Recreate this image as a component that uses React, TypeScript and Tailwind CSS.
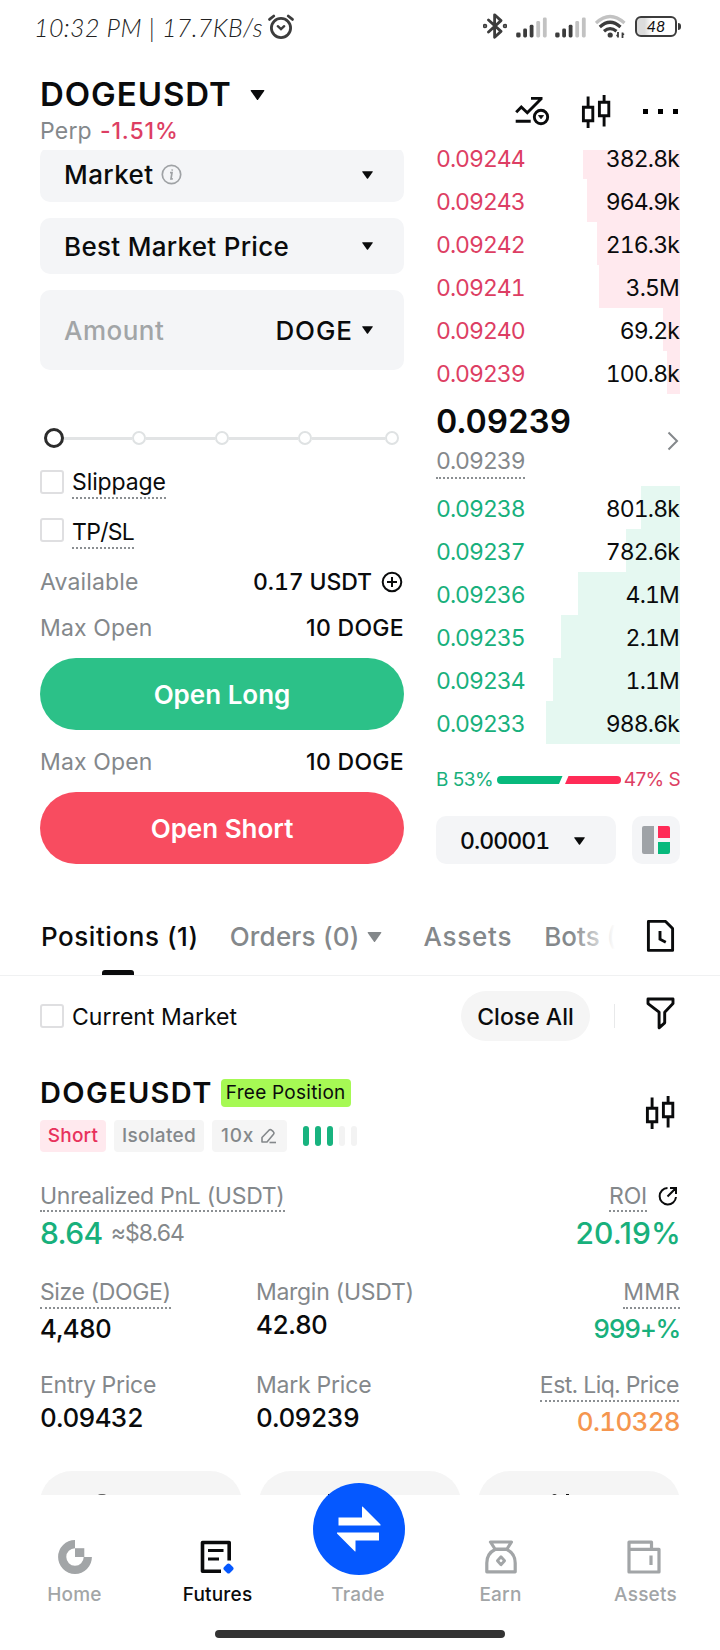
import { ReactNode } from "react";

type Level = { price: string; qty: string; bar: string };

const asks: Level[] = [
  { price: "0.09244", qty: "382.8k", bar: "w-[97px]" },
  { price: "0.09243", qty: "964.9k", bar: "w-[93px]" },
  { price: "0.09242", qty: "216.3k", bar: "w-[83px]" },
  { price: "0.09241", qty: "3.5M", bar: "w-[81px]" },
  { price: "0.09240", qty: "69.2k", bar: "w-[17px]" },
  { price: "0.09239", qty: "100.8k", bar: "w-[13px]" },
];

const bids: Level[] = [
  { price: "0.09238", qty: "801.8k", bar: "w-[39px]" },
  { price: "0.09237", qty: "782.6k", bar: "w-[54px]" },
  { price: "0.09236", qty: "4.1M", bar: "w-[102px]" },
  { price: "0.09235", qty: "2.1M", bar: "w-[119px]" },
  { price: "0.09234", qty: "1.1M", bar: "w-[127px]" },
  { price: "0.09233", qty: "988.6k", bar: "w-[134px]" },
];

const Caret = ({ className = "w-[11px] h-[8px]" }: { className?: string }) => (
  <svg viewBox="0 0 10 7" className={className} fill="currentColor">
    <path d="M0.6 0h8.8q.7 0 .3.7L5.5 6.6q-.5.7-1 0L.3.7Q-.1 0 .6 0z" />
  </svg>
);

const Candles = () => (
  <svg width="32" height="34" viewBox="0 0 32 34" fill="none" stroke="#0a0b0c" strokeWidth="2.9">
    <path d="M3.4 13.2h9.4v13.6H3.4zM8.1 2.4v10.8M8.1 26.8V34M19.4 8.2h9.4v13.6h-9.4zM24.1 1v7.2M24.1 21.8v10.6" />
  </svg>
);

const Signal = () => (
  <svg width="32" height="21" viewBox="0 0 32 21">
    <rect x="0.2" y="15.5" width="4.4" height="5" rx="1.4" fill="#3c3c3c" />
    <rect x="7.2" y="11.5" width="3.8" height="9" rx="1.4" fill="#3c3c3c" />
    <rect x="13.7" y="7.8" width="3.8" height="12.7" rx="1.4" fill="#3c3c3c" />
    <rect x="20.3" y="4" width="3.8" height="16.5" rx="1.4" fill="#c2c2c2" />
    <rect x="26.9" y="0.5" width="3.8" height="20" rx="1.4" fill="#c2c2c2" />
  </svg>
);

const Checkbox = () => (
  <span className="block w-6 h-6 shrink-0 rounded-[3px] border-2 border-[#dfdfe1]" />
);

const StatusBar = () => (
  <div className="h-14 flex items-center justify-between pl-[34px] pr-[39px] shrink-0">
    <div className="flex items-center pb-[3px]">
      <span className="font-['Lato'] italic font-light text-[25px] tracking-[0.4px] text-[#222] pt-[2px] w-[233px] whitespace-nowrap">
        10:32 PM | 17.7KB/s
      </span>
      <svg width="28" height="26" viewBox="0 0 28 26" fill="none" stroke="#3c3c3c" strokeWidth="2.8" strokeLinecap="round">
        <circle cx="14" cy="14" r="9.6" />
        <path d="M2.5 5.4 6.8 2M25.5 5.4 21.2 2" />
        <path d="m10.8 12.2 3.2 3 3.2-3" strokeWidth="2.4" />
      </svg>
    </div>
    <div className="flex items-center pb-[4px]">
      <svg width="24" height="26" viewBox="0 0 24 26" fill="none" stroke="#3c3c3c" strokeWidth="2.8" strokeLinejoin="round" strokeLinecap="round">
        <path d="M5.5 7 18 18.4l-6.4 5.8V1.8L18 7.6 5.5 19" />
        <circle cx="2" cy="13" r="0.9" />
        <circle cx="22" cy="13" r="0.9" />
      </svg>
      <div className="ml-[9px] mt-[2px]"><Signal /></div>
      <div className="ml-[7px] mt-[2px]"><Signal /></div>
      <svg className="ml-[8px]" width="31" height="25" viewBox="0 0 31 25" fill="none" strokeWidth="3.2">
        <path d="M1 9Q15 -4 29.5 9" stroke="#c2c2c2" />
        <path d="M4.8 13Q15 3.5 25.5 13" stroke="#3c3c3c" />
        <path d="M9 17.2Q15 12 21.5 17.2" stroke="#3c3c3c" />
        <circle cx="15.2" cy="21" r="2.6" fill="#3c3c3c" />
        <path d="M23 18v5.5M27.5 24v-5.5" stroke="#3c3c3c" strokeWidth="1.8" />
        <path d="M21.3 21.5h1.7M27.5 20.3h1.7" stroke="#3c3c3c" strokeWidth="1.5" />
      </svg>
      <div className="ml-[9px] w-[42px] h-[21px] rounded-[6px] border-2 border-[#3c3c3c] flex items-center justify-center bg-gradient-to-r from-[#dcdcdc] from-20% to-white to-40%">
        <span className="font-['Lato'] italic text-[16px] leading-none text-[#111]">48</span>
      </div>
      <span className="w-[3px] h-[7px] ml-px bg-[#3c3c3c] rounded-r-sm" />
    </div>
  </div>
);

const Header = () => (
  <header className="h-[94px] shrink-0 pl-10 pr-[42px] flex justify-between">
    <div className="pt-[20px]">
      <div className="flex items-center h-[38px]">
        <h1 className="text-[33px] font-semibold tracking-[0.95px]">DOGEUSDT</h1>
        <Caret className="ml-[18px] w-[15px] h-[10px]" />
      </div>
      <div className="flex items-center h-[34px] text-[23px]">
        <span className="text-[#84888b] tracking-[0.2px]">Perp</span>
        <span className="ml-[8px] font-medium tracking-[0.9px] text-[#dd3e63]">-1.51%</span>
      </div>
    </div>
    <div className="flex items-center pt-[16px]">
      <svg width="36" height="32" viewBox="0 0 36 32" fill="none" stroke="#0a0b0c" strokeWidth="2.9">
        <path d="M2.2 17.3 7.3 12l6 5.8L27.2 3.7M17 3.4h11.5M1.7 26.3h15" />
        <circle cx="27" cy="22" r="6.7" />
        <path d="M24.5 20.5h5L27 23.8z" fill="#0a0b0c" strokeWidth="0.8" />
      </svg>
      <div className="ml-[30px]"><Candles /></div>
      <div className="ml-[31px] flex gap-[10px]">
        <i className="block w-[5px] h-[5px] bg-black" />
        <i className="block w-[5px] h-[5px] bg-black" />
        <i className="block w-[5px] h-[5px] bg-black" />
      </div>
    </div>
  </header>
);

const OrderForm = () => (
  <section className="w-[364px] flex flex-col">
    <div className="h-[52px] overflow-hidden flex flex-col justify-end">
      <div className="h-[55px] shrink-0 rounded-[10px] bg-[#f4f5f7] flex items-center pl-6 pr-[31px] text-[26px] font-medium">
        <span className="tracking-[0.4px]">Market</span>
        <svg className="ml-[8px]" width="21" height="21" viewBox="0 0 21 21" fill="none" stroke="#9fa2a5" strokeWidth="1.7">
          <circle cx="10.5" cy="10.5" r="9.2" />
          <path d="M9 8.7h2L10 14.8h1.8M11.3 5.4l-.2 1.2" />
        </svg>
        <Caret className="ml-auto w-[11px] h-[8px]" />
      </div>
    </div>
    <div className="mt-4 h-14 rounded-[10px] bg-[#f4f5f7] flex items-center pl-6 pr-[31px] text-[26px] font-medium">
      <span className="tracking-[0.3px]">Best Market Price</span>
      <Caret className="ml-auto w-[11px] h-[8px]" />
    </div>
    <div className="mt-4 h-20 rounded-[10px] bg-[#f4f5f7] flex items-center pl-6 pr-[31px] text-[26px] font-medium">
      <span className="tracking-[0.5px] text-[#a2a5a7]">Amount</span>
      <span className="ml-auto mr-[9px] tracking-[0.95px]">DOGE</span>
      <Caret />
    </div>

    {/* size slider */}
    <div className="mt-[58px] h-5 flex items-center pl-1 pr-[5px]">
      <i className="block w-5 h-5 rounded-full border-[3px] border-[#2c2c2c]" />
      <i className="block w-[68px] h-[3px] bg-[#e2e4e5]" />
      <i className="block w-[14px] h-[14px] rounded-full border-2 border-[#dfe2e3]" />
      <i className="block w-[69px] h-[3px] bg-[#e2e4e5]" />
      <i className="block w-[14px] h-[14px] rounded-full border-2 border-[#dfe2e3]" />
      <i className="block w-[69px] h-[3px] bg-[#e2e4e5]" />
      <i className="block w-[14px] h-[14px] rounded-full border-2 border-[#dfe2e3]" />
      <i className="block flex-1 h-[3px] bg-[#e2e4e5]" />
      <i className="block w-[14px] h-[14px] rounded-full border-2 border-[#dfe2e3]" />
    </div>

    <div className="mt-[18px] h-[34px] flex items-start text-[23px]">
      <div className="pt-[4px]"><Checkbox /></div>
      <span className="ml-2 pt-[2px] leading-[29px] tracking-[-0.1px] border-b-2 border-dotted border-[#8b8f92]">Slippage</span>
    </div>
    <div className="mt-[16px] h-[34px] flex items-start text-[23px]">
      <div className="pt-[2px]"><Checkbox /></div>
      <span className="ml-2 pt-[2px] leading-[29px] tracking-[-0.7px] border-b-2 border-dotted border-[#8b8f92]">TP/SL</span>
    </div>

    <div className="mt-[16px] h-[32px] flex items-center text-[23px]">
      <span className="text-[#84888b] tracking-[0.15px]">Available</span>
      <span className="ml-auto font-medium tracking-[-0.1px] tabular-nums">0.17 USDT</span>
      <svg className="ml-[9px] mr-[1px]" width="22" height="22" viewBox="0 0 22 22" fill="none" stroke="#0a0b0c" strokeWidth="2">
        <circle cx="11" cy="11" r="9.3" />
        <path d="M11 6v10M6 11h10" />
      </svg>
    </div>
    <div className="mt-[14px] h-[32px] flex items-center justify-between text-[23px]">
      <span className="text-[#84888b] tracking-[0.15px]">Max Open</span>
      <span className="font-medium tracking-[0.3px]">10 DOGE</span>
    </div>
    <button className="mt-[14px] h-[72px] rounded-full bg-[#2cc188] text-white text-[26px] font-semibold">Open Long</button>
    <div className="mt-[16px] h-[32px] flex items-center justify-between text-[23px]">
      <span className="text-[#84888b] tracking-[0.15px]">Max Open</span>
      <span className="font-medium tracking-[0.3px]">10 DOGE</span>
    </div>
    <button className="mt-[14px] h-[72px] rounded-full bg-[#f84c60] text-white text-[26px] font-semibold">Open Short</button>
  </section>
);

const Row = ({ level, side }: { level: Level; side: "ask" | "bid" }) => (
  <div className="relative h-[43px] shrink-0 flex items-center justify-between pt-[3px] pr-px text-[23px] tabular-nums">
    <div className={`absolute right-0 inset-y-0 ${level.bar} ${side === "ask" ? "bg-[#ffe9ee]" : "bg-[#e5f8f1]"}`} />
    <span className={`relative tracking-[-1px] ${side === "ask" ? "text-[#dd3e63]" : "text-[#18b07c]"}`}>{level.price}</span>
    <span className="relative tracking-[-0.85px]">{level.qty}</span>
  </div>
);

const OrderBook = () => (
  <section className="w-[244px] flex flex-col">
    <div className="h-[244px] overflow-hidden flex flex-col justify-end">
      {asks.map((l) => <Row key={l.price} level={l} side="ask" />)}
    </div>
    <div className="h-[92px] flex items-center justify-between">
      <div className="flex flex-col items-start">
        <span className="text-[33px] leading-[40px] font-semibold tracking-[-0.3px] tabular-nums">0.09239</span>
        <span className="text-[23px] leading-[31px] pt-[2px] mt-[3px] tracking-[-1px] tabular-nums text-[#84888b] border-b-2 border-dotted border-[#8b8f92]">0.09239</span>
      </div>
      <svg className="mr-px mt-[2px]" width="12" height="20" viewBox="0 0 12 20" fill="none" stroke="#84888b" strokeWidth="2">
        <path d="m1.5 1.5 8.5 8.5-8.5 8.5" />
      </svg>
    </div>
    {bids.map((l) => <Row key={l.price} level={l} side="bid" />)}

    <div className="mt-[24px] h-[24px] flex items-center justify-between text-[19px]">
      <span className="tracking-[-0.5px] text-[#18b07c]">B 53%</span>
      <svg width="124" height="8" viewBox="0 0 124 8">
        <path d="M4 0h61.5l-3.5 8H4a4 4 0 0 1 0-8z" fill="#07b97c" />
        <path d="M71.5 0H120a4 4 0 0 1 0 8H68z" fill="#ff2b57" />
      </svg>
      <span className="tracking-[-0.6px] text-[#dd3e63]">47% S</span>
    </div>
    <div className="mt-[24px] flex justify-between">
      <div className="w-[180px] h-12 rounded-[10px] bg-[#f4f5f7] flex items-center pl-6 pr-[31px] pt-[2px] text-[23px] font-medium">
        <span className="tabular-nums tracking-[-0.9px]">0.00001</span>
        <Caret className="ml-auto w-[11px] h-[8px]" />
      </div>
      <div className="w-12 h-12 rounded-[10px] bg-[#f4f5f7] flex items-center justify-center gap-1">
        <i className="block w-3 h-7 rounded-l-[2px] bg-[#9fa3a7]" />
        <div className="flex flex-col gap-1">
          <i className="block w-3 h-3 rounded-tr-[2px] bg-[#ff2b57]" />
          <i className="block w-3 h-3 rounded-br-[2px] bg-[#07b97c]" />
        </div>
      </div>
    </div>
  </section>
);

const Tabs = () => (
  <nav className="mt-[34px] h-[78px] shrink-0 pl-[41px] pr-[45px] flex border-b border-[#f0f1f2] text-[26px] font-medium">
    <div className="relative w-[574px] h-[77px] flex overflow-hidden whitespace-nowrap text-[#84888b]">
      <div className="w-[158px] flex flex-col items-center text-[#0a0b0c]">
        <span className="leading-[78px] h-[72px] tracking-[0.55px]">Positions (1)</span>
        <i className="block w-8 h-[5px] mr-[3px] rounded-t-[3px] bg-[#0a0b0c]" />
      </div>
      <div className="ml-[31px] flex items-center h-[77px]">
        <span className="tracking-[0.2px]">Orders (0)</span>
        <Caret className="ml-[7px] w-[15px] h-[10px]" />
      </div>
      <span className="ml-[42px] leading-[78px] tracking-[0.75px]">Assets</span>
      <span className="ml-[32px] leading-[78px]">Bots (0)</span>
      <div className="absolute right-0 inset-y-0 w-[44px] bg-gradient-to-r from-white/0 to-white" />
    </div>
    <svg className="ml-auto mt-[21px]" width="29" height="34" viewBox="0 0 29 34" fill="none" stroke="#0a0b0c" strokeWidth="2.9">
      <path d="M2.4 2.4h17.2l7 7.2v21.8H2.4z" strokeLinejoin="round" />
      <path d="M14 12v8.2l5.8 3" />
    </svg>
  </nav>
);

const Label = ({ children, dotted, className = "tracking-[-0.3px]" }: { children: ReactNode; dotted?: boolean; className?: string }) => (
  <span className={`text-[23px] leading-[30px] font-normal text-[#84888b] ${dotted ? "border-b-2 border-dotted border-[#8b8f92]" : ""} ${className}`}>
    {children}
  </span>
);

const Position = () => (
  <section className="px-10 flex flex-col">
    <div className="mt-[15px] h-[50px] flex items-center">
      <Checkbox />
      <span className="ml-2 pt-[2px] text-[23px] tracking-[0.05px]">Current Market</span>
      <button className="ml-auto w-[129px] h-[50px] pt-[2px] rounded-full bg-[#f5f5f5] text-[23px] font-medium">Close All</button>
      <i className="block ml-[24px] w-px h-6 bg-[#e8e9ea]" />
      <svg className="ml-[31px] mr-[5px] mb-[5px]" width="29" height="33" viewBox="0 0 29 33" fill="none" stroke="#0a0b0c" strokeWidth="2.9" strokeLinejoin="round">
        <path d="M2 2h25v4.6l-8.3 8.6v10.6l-5.6 5V15.2L2 6.6z" />
      </svg>
    </div>

    <div className="mt-[34px] flex items-center justify-between">
      <div>
        <div className="h-[36px] flex items-center">
          <h2 className="text-[29px] font-semibold tracking-[1.35px]">DOGEUSDT</h2>
          <span className="ml-[8px] w-[130px] h-7 rounded-[4px] bg-[#a6f954] text-[19px] leading-7 text-center tracking-[0.25px]">Free Position</span>
        </div>
        <div className="mt-[9px] h-8 flex items-center text-[19px] leading-8 text-[#84888b]">
          <span className="w-[66px] text-center rounded-[4px] bg-[#ffe9ee] text-[#e8315c] font-medium tracking-[0.2px]">Short</span>
          <span className="ml-2 w-[90px] text-center rounded-[4px] bg-[#f5f5f5] font-medium tracking-[0.3px]">Isolated</span>
          <span className="ml-2 w-[75px] flex items-center pl-[9px] rounded-[4px] bg-[#f5f5f5] font-medium tracking-[0.8px]">
            10x
            <svg className="ml-[6px]" width="17" height="17" viewBox="0 0 17 17" fill="none" stroke="#84888b" strokeWidth="1.6">
              <path d="M2 9.5 9 2.2q1.3-1.2 2.6 0l1.7 1.5q1.2 1.2.2 2.6L7 14H2z" strokeLinejoin="round" />
              <path d="M9.5 14.5H16" />
            </svg>
          </span>
          <div className="ml-4 flex gap-[6px]">
            <i className="block w-[6px] h-5 rounded-full bg-[#18b37f]" />
            <i className="block w-[6px] h-5 rounded-full bg-[#18b37f]" />
            <i className="block w-[6px] h-5 rounded-full bg-[#18b37f]" />
            <i className="block w-[6px] h-5 rounded-full bg-[#f3f3f3]" />
            <i className="block w-[6px] h-5 rounded-full bg-[#f3f3f3]" />
          </div>
        </div>
      </div>
      <div className="mr-1 mb-[3px]"><Candles /></div>
    </div>

    <div className="mt-[29px] flex justify-between text-[23px] text-[#84888b]">
      <div>
        <div className="h-[31px] flex items-start"><Label dotted className="-mb-1 tracking-[-0.27px]"><span className="block h-[29px]">Unrealized PnL (USDT)</span></Label></div>
        <div className="h-[42px] flex items-center">
          <span className="text-[30px] font-medium text-[#18b07c] tracking-[-0.6px]">8.64</span>
          <span className="ml-[8px] tracking-[-0.95px]">≈$8.64</span>
        </div>
      </div>
      <div className="flex flex-col items-end">
        <div className="h-[31px] flex items-start">
          <Label dotted className="tracking-[-0.2px]"><span className="block h-[29px]">ROI</span></Label>
          <svg className="ml-[11px] mt-[5px] mr-[2px]" width="20" height="20" viewBox="0 0 20 20" fill="none" stroke="#0a0b0c" strokeWidth="2">
            <path d="M9.5 2A8.2 8.2 0 1 0 18 11M9.5 10.5 17.5 2.5M12 2h6v6" />
          </svg>
        </div>
        <span className="text-[30px] leading-[42px] -mr-px font-medium text-[#18b07c] tracking-[0.15px]">20.19%</span>
      </div>
    </div>

    <div className="mt-[23px] grid grid-cols-[216px_1fr_auto] text-[26px] font-medium tabular-nums">
      <div className="h-[93px] flex flex-col items-start">
        <Label dotted className="tracking-[-0.4px]">Size (DOGE)</Label>
        <span className="leading-[40px] tracking-[-0.6px]">4,480</span>
      </div>
      <div className="h-[93px] flex flex-col items-start">
        <Label>Margin (USDT)</Label>
        <span className="leading-[36px] tracking-[-0.6px]">42.80</span>
      </div>
      <div className="h-[93px] flex flex-col items-end">
        <Label dotted className="tracking-[0.1px]">MMR</Label>
        <span className="leading-[40px] tracking-[-1.3px] text-[#18b07c]">999+%</span>
      </div>
      <div className="h-[93px] flex flex-col items-start">
        <Label className="tracking-[-0.25px]">Entry Price</Label>
        <span className="leading-[36px] tracking-[-0.7px]">0.09432</span>
      </div>
      <div className="h-[93px] flex flex-col items-start">
        <Label className="tracking-[-0.2px]">Mark Price</Label>
        <span className="leading-[36px] tracking-[-0.7px]">0.09239</span>
      </div>
      <div className="h-[93px] flex flex-col items-end">
        <Label dotted className="mr-px tracking-[-0.5px]">Est. Liq. Price</Label>
        <span className="leading-[40px] tracking-[-0.7px] text-[#f5964f]">0.10328</span>
      </div>
    </div>

    {/* action buttons, scrolled under the bottom nav */}
    <div className="mt-[8px] h-[24px] overflow-hidden flex justify-between">
      <div className="w-[202px] h-[64px] rounded-[32px] bg-[#f5f5f5] pt-[23px] pl-[57px]"><i className="block w-[10px] h-1 rounded-t-full bg-[#666]" /></div>
      <div className="w-[202px] h-[64px] rounded-[32px] bg-[#f5f5f5] pt-[23px] pl-[69px]"><i className="block w-[3px] h-1 bg-[#111]" /></div>
      <div className="w-[202px] h-[64px] rounded-[32px] bg-[#f5f5f5] pt-[23px] pl-[74px] flex gap-[9px]">
        <i className="block w-[5px] h-1 rounded-t-full bg-[#333]" />
        <i className="block w-[3px] h-1 bg-[#111]" />
      </div>
    </div>
  </section>
);

const NavItem = ({ label, active, children }: { label: string; active?: boolean; children?: ReactNode }) => (
  <div className={`flex flex-col items-center justify-end ${active ? "text-[#0a0b0c]" : "text-[#a2a5a7]"}`}>
    {children}
    <span className="mt-[6px] text-[19px] leading-[30px] font-medium tracking-[0.2px]">{label}</span>
  </div>
);

const BottomNav = () => (
  <footer className="h-[155px] shrink-0 flex flex-col items-center bg-white">
    <div className="h-[115px] w-full pl-[3px] grid grid-rows-[115px] grid-cols-[143px_143px_138px_147px_143px]">
      <NavItem label="Home">
        <svg width="34" height="34" viewBox="0 0 34 34" fill="none">
          <path d="M17 4.2A12.8 12.8 0 1 0 29.8 17" stroke="#a2a5a7" strokeWidth="8.2" />
          <path d="M17 8.2h9.3V17H17z" fill="#a2a5a7" />
        </svg>
      </NavItem>
      <NavItem label="Futures" active>
        <svg className="mr-[2px]" width="34" height="34" viewBox="0 0 34 34" fill="none" stroke="#0a0b0c" strokeWidth="3.6">
          <path d="M29.2 20.5V2.5H2.500v28.7h18.5" strokeLinejoin="round" />
          <path d="M8 10.5h15.5M8 19h11" strokeWidth="3.2" />
          <path d="m28.5 25.5 3 3-3 3-3-3z" fill="#0558ff" stroke="#0558ff" strokeWidth="4" strokeLinejoin="round" />
        </svg>
      </NavItem>
      <NavItem label="Trade">
        <div className="w-[92px] h-[92px] ml-[2px] shrink-0 rounded-full bg-[#0558ff] flex items-center justify-center mb-[-1px]">
          <svg width="44" height="46" viewBox="0 0 44 46" fill="#fff">
            <path d="M1.5 11.5H25V1q0-1 .8-.2L43.5 18.5v1H1.500z" />
            <path d="M42 34.5H18.5V45q0 1-.8.2L0 27.500v-1h42z" />
          </svg>
        </div>
      </NavItem>
      <NavItem label="Earn">
        <svg width="34" height="34" viewBox="0 0 34 34" fill="none" stroke="#a2a5a7" strokeWidth="3.2" strokeLinejoin="round">
          <path d="M6.5 2h21l-4.500 7h-12zM11 9.5C5 12.5 2.800 17 2.800 23v8.800h28.400V23c0-6-2.200-10.500-8.200-13.500z" />
          <path d="m17 16.8 3.6 4-3.600 4-3.600-4z" strokeWidth="2.8" />
        </svg>
      </NavItem>
      <NavItem label="Assets">
        <svg className="mr-[3px]" width="34" height="34" viewBox="0 0 34 34" fill="none" stroke="#a2a5a7" strokeWidth="3.2" strokeLinejoin="round">
          <path d="M2 9.3h30v22.7H2zM2 9.3V2.200h22.500v7" />
          <path d="M24 15.5v9.5" />
        </svg>
      </NavItem>
    </div>
    <div className="mt-[20px] w-[290px] h-[8px] rounded-full bg-[#333]" />
  </footer>
);

export default function App() {
  return (
    <main className="w-[720px] h-[1650px] overflow-hidden bg-white text-[#0a0b0c] font-['Inter','Liberation_Sans',sans-serif] flex flex-col">
      <StatusBar />
      <Header />
      <div className="px-10 flex justify-between shrink-0">
        <OrderForm />
        <OrderBook />
      </div>
      <Tabs />
      <Position />
      <div className="flex-1" />
      <BottomNav />
    </main>
  );
}
